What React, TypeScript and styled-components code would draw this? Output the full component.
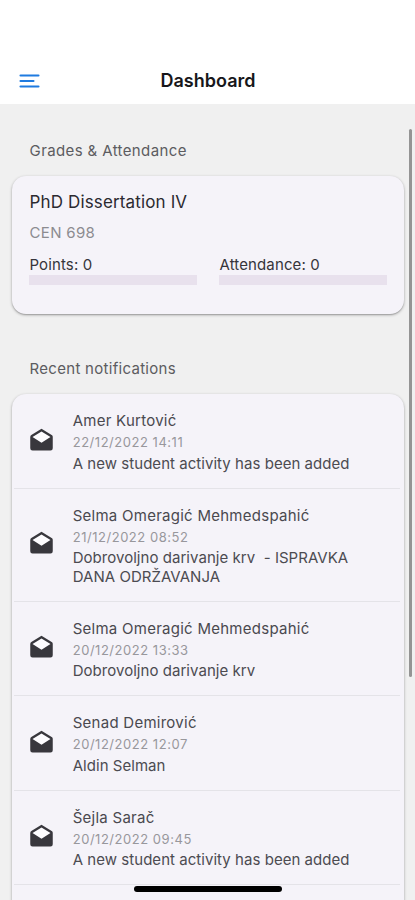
import React from 'react';
import styled, { createGlobalStyle } from 'styled-components';

const GlobalStyle = createGlobalStyle`
  * { box-sizing: border-box; }
  body { margin: 0; background: #f0f0f0; font-family: Inter, sans-serif; }
`;

const Screen = styled.main`
  position: relative;
  height: 900px;
  overflow: hidden;
  display: flex;
  flex-direction: column;
  background: #f0f0f0;
`;

const Header = styled.header`
  flex: none;
  height: 104px;
  padding: 57px 19px 0;
  display: grid;
  grid-template-columns: 22px 1fr 22px;
  align-items: center;
  background: #fff;
`;

const MenuButton = styled.button`
  display: flex;
  padding: 0;
  border: 0;
  background: none;
`;

const Title = styled.h1`
  margin: 0;
  padding: 1px 0 0 1px;
  font-size: 18px;
  font-weight: 600;
  letter-spacing: 0;
  line-height: 24px;
  text-align: center;
  color: #17171a;
`;

const Content = styled.div`
  flex: 1;
  min-height: 0;
  padding: 0 11px 0 12px;
  overflow: hidden;
`;

const SectionTitle = styled.h2<{ $top: number; $bottom: number }>`
  margin: ${(p) => p.$top}px 0 ${(p) => p.$bottom}px 17.6px;
  font-size: 15px;
  font-weight: 400;
  letter-spacing: ${(p) => (p.$top > 40 ? 0.29 : 0.38)}px;
  line-height: 20px;
  color: #5c5c60;
`;

const Card = styled.section`
  border-radius: 14px;
  background: #f5f3f9;
  box-shadow: 0 1px 3px rgba(0, 0, 0, 0.32), 0 1px 1px rgba(0, 0, 0, 0.12);
`;

const CourseCard = styled(Card)`
  height: 138px;
  padding: 14px 17px 0;
`;

const CourseName = styled.h3`
  margin: 0;
  padding-left: 0.5px;
  font-size: 17px;
  font-weight: 400;
  letter-spacing: 0.14px;
  line-height: 24px;
  color: #2b2a30;
`;

const CourseCode = styled.p`
  margin: 9px 0 0;
  padding-left: 0.6px;
  font-size: 15px;
  letter-spacing: 0.32px;
  line-height: 20px;
  color: #8c8b90;
`;

const Stats = styled.div`
  display: grid;
  grid-template-columns: 1fr 1fr;
  gap: 22px;
  margin-top: 12px;
`;

const StatLabel = styled.div`
  padding-left: 0.5px;
  font-size: 15px;
  letter-spacing: 0.12px;
  line-height: 20px;
  color: #36353b;
`;

const Track = styled.div`
  height: 10px;
  background: #e8e1ed;
`;

const NotificationList = styled(Card)`
  height: 560px;
`;

const Row = styled.article`
  display: grid;
  grid-template-columns: 27px 1fr;
  column-gap: 17.7px;
  align-items: center;
  padding: 17px 15px 14.5px 16px;
  position: relative;

  &::after {
    content: '';
    position: absolute;
    left: 2px;
    right: 4px;
    bottom: 0;
    height: 1px;
    background: #e4e3e8;
  }
`;

const Sender = styled.div`
  font-size: 15px;
  letter-spacing: 0.26px;
  line-height: 20px;
  color: #4a494f;
`;

const Time = styled.time`
  display: block;
  margin: 1px 0 2.5px;
  font-size: 13px;
  letter-spacing: 0.53px;
  line-height: 20px;
  color: #98979c;
`;

const Message = styled.div`
  padding-bottom: 1px;
  font-size: 15px;
  letter-spacing: 0.04px;
  line-height: 18.5px;
  white-space: pre-line;
  color: #4c4b51;
`;

const ScrollThumb = styled.div`
  position: absolute;
  top: 129px;
  right: 3px;
  width: 3px;
  height: 548px;
  border-radius: 2px;
  background: #949494;
`;

const HomeIndicator = styled.div`
  position: absolute;
  left: 134px;
  bottom: 8px;
  width: 148px;
  height: 6px;
  border-radius: 3px;
  background: #000;
`;

const Envelope = styled.svg`
  display: block;
  margin-bottom: 3px;
`;

const MailIcon = () => (
  <Envelope width="27" height="27" viewBox="0 0 24 24" fill="#38373d" aria-hidden="true">
    <path d="M4 8l8 5 8-5-8-5z" fill="#fdfcff" />
    <path d="M4 8l8 5 8-5-8-5-8 5zM22 8v10a2 2 0 0 1-2 2H4a2 2 0 0 1-2-2V8c0-.73.39-1.36.97-1.71L12 .64l9.03 5.65c.58.35.97.98.97 1.71z" />
  </Envelope>
);

const notifications = [
  { sender: 'Amer Kurtović', time: '22/12/2022 14:11', message: 'A new student activity has been added' },
  {
    sender: 'Selma Omeragić Mehmedspahić',
    time: '21/12/2022 08:52',
    message: 'Dobrovoljno darivanje krv \u00a0- ISPRAVKA\nDANA ODRŽAVANJA',
  },
  { sender: 'Selma Omeragić Mehmedspahić', time: '20/12/2022 13:33', message: 'Dobrovoljno darivanje krv' },
  { sender: 'Senad Demirović', time: '20/12/2022 12:07', message: 'Aldin Selman' },
  { sender: 'Šejla Sarač', time: '20/12/2022 09:45', message: 'A new student activity has been added' },
];

export default function App() {
  return (
    <>
      <GlobalStyle />
      <Screen>
        <Header>
          <MenuButton aria-label="Menu">
            <svg width="22" height="16" viewBox="0 0 22 16" stroke="#1f7be0" strokeWidth="2.1" strokeLinecap="round">
              <path d="M1.5 2.5h18M1.5 8h13M1.5 13.5h18" />
            </svg>
          </MenuButton>
          <Title>Dashboard</Title>
        </Header>
        <Content>
          <SectionTitle $top={37} $bottom={15}>Grades &amp; Attendance</SectionTitle>
          <CourseCard>
            <CourseName>PhD Dissertation IV</CourseName>
            <CourseCode>CEN 698</CourseCode>
            <Stats>
              <div>
                <StatLabel>Points: 0</StatLabel>
                <Track />
              </div>
              <div>
                <StatLabel>Attendance: 0</StatLabel>
                <Track />
              </div>
            </Stats>
          </CourseCard>
          <SectionTitle $top={45} $bottom={15}>Recent notifications</SectionTitle>
          <NotificationList>
            {notifications.map((n) => (
              <Row key={n.time}>
                <MailIcon />
                <div>
                  <Sender>{n.sender}</Sender>
                  <Time>{n.time}</Time>
                  <Message>{n.message}</Message>
                </div>
              </Row>
            ))}
          </NotificationList>
        </Content>
        <ScrollThumb />
        <HomeIndicator />
      </Screen>
    </>
  );
}
